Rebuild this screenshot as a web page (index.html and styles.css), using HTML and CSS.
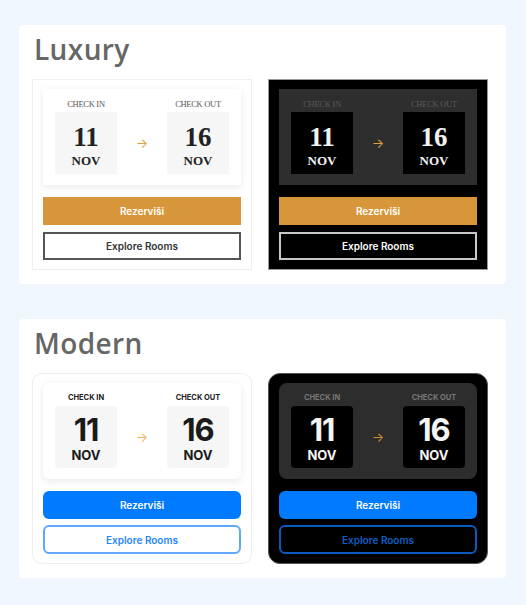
FILE: index.html
```html
<!DOCTYPE html>
<html lang="en">
<head>
    <meta charset="UTF-8">
    <meta name="viewport" content="width=device-width, initial-scale=1.0">
    <title>Booking Widgets</title>
    <link rel="stylesheet" href="styles.css">
</head>
<body>
    <main class="page">

        <!-- Luxury theme -->
        <section class="panel">
            <h2 class="panel-title">Luxury</h2>
            <div class="card-row">
                <div class="card luxury light">
                    <div class="dates">
                        <span class="label">CHECK IN</span>
                        <span class="label">CHECK OUT</span>
                        <div class="tile"><span class="day">11</span><span class="month">NOV</span></div>
                        <span class="arrow">&rarr;</span>
                        <div class="tile"><span class="day">16</span><span class="month">NOV</span></div>
                    </div>
                    <button class="btn btn-book">Rezerviši</button>
                    <button class="btn btn-explore">Explore Rooms</button>
                </div>
                <div class="card luxury dark">
                    <div class="dates">
                        <span class="label">CHECK IN</span>
                        <span class="label">CHECK OUT</span>
                        <div class="tile"><span class="day">11</span><span class="month">NOV</span></div>
                        <span class="arrow">&rarr;</span>
                        <div class="tile"><span class="day">16</span><span class="month">NOV</span></div>
                    </div>
                    <button class="btn btn-book">Rezerviši</button>
                    <button class="btn btn-explore">Explore Rooms</button>
                </div>
            </div>
        </section>

        <!-- Modern theme -->
        <section class="panel">
            <h2 class="panel-title">Modern</h2>
            <div class="card-row">
                <div class="card modern light">
                    <div class="dates">
                        <span class="label">CHECK IN</span>
                        <span class="label">CHECK OUT</span>
                        <div class="tile"><span class="day">11</span><span class="month">NOV</span></div>
                        <span class="arrow">&rarr;</span>
                        <div class="tile"><span class="day">16</span><span class="month">NOV</span></div>
                    </div>
                    <button class="btn btn-book">Rezerviši</button>
                    <button class="btn btn-explore">Explore Rooms</button>
                </div>
                <div class="card modern dark">
                    <div class="dates">
                        <span class="label">CHECK IN</span>
                        <span class="label">CHECK OUT</span>
                        <div class="tile"><span class="day">11</span><span class="month">NOV</span></div>
                        <span class="arrow">&rarr;</span>
                        <div class="tile"><span class="day">16</span><span class="month">NOV</span></div>
                    </div>
                    <button class="btn btn-book">Rezerviši</button>
                    <button class="btn btn-explore">Explore Rooms</button>
                </div>
            </div>
        </section>

    </main>
</body>
</html>
```

FILE: styles.css
```css
body {
    margin: 0;
    padding: 0;
    background-color: #f0f6fd;
    font-family: 'Inter', sans-serif;
}

.page {
    display: flex;
    flex-direction: column;
    gap: 35px;
    padding: 25px 0 0 19px;
}

/* Panel */
.panel {
    width: 487px;
    box-sizing: border-box;
    background-color: #fff;
    border-radius: 4px;
    padding: 10px 18px 14px 13px;
}

.panel-title {
    margin: 0 0 16px 2px;
    font-family: 'Open Sans', sans-serif;
    font-size: 28px;
    font-weight: 600;
    line-height: 28px;
    color: #666;
    letter-spacing: 0.4px;
}

.card-row {
    display: flex;
    gap: 16px;
}

/* Card */
.card {
    width: 220px;
    box-sizing: border-box;
    padding: 9px 10px;
    display: flex;
    flex-direction: column;
    border: 1px solid #eee;
}

.dates {
    display: grid;
    grid-template-columns: 62px 1fr 62px;
    grid-template-rows: 10px 62px;
    row-gap: 3px;
    padding: 10px 12px 11px 12px;
    margin-bottom: 12px;
}

.label {
    font-size: 8px;
    line-height: 10px;
    text-align: center;
    white-space: nowrap;
    justify-self: center;
}

.dates .label:nth-child(2) {
    grid-column: 3;
}

.tile {
    display: flex;
    flex-direction: column;
    align-items: center;
    justify-content: center;
}

.day {
    line-height: 1;
}

.month {
    line-height: 1;
}

.arrow {
    align-self: center;
    justify-self: center;
    color: #e0a040;
    font-size: 13px;
}

/* Buttons */
.btn {
    display: block;
    width: 100%;
    height: 28px;
    box-sizing: border-box;
    border: none;
    font-family: 'Inter', sans-serif;
    font-size: 10px;
    font-weight: 600;
    cursor: pointer;
}

.btn-book {
    color: #fff;
    margin-bottom: 7px;
}

.btn-explore {
    border: 2px solid;
}

/* Luxury */
.luxury .label {
    font-family: 'Liberation Serif', serif;
    font-size: 8.5px;
    letter-spacing: -0.3px;
}

.luxury .day {
    font-family: 'Liberation Serif', serif;
    font-size: 27px;
    font-weight: 700;
    margin-top: 4px;
}

.luxury .month {
    font-family: 'Liberation Serif', serif;
    font-size: 13px;
    font-weight: 700;
    margin-top: 3px;
}

.luxury .btn-book {
    background-color: #d8963a;
}

.luxury.light .dates {
    background-color: #fff;
    box-shadow: 0 2px 8px rgba(0, 0, 0, 0.09);
}

.luxury.light .label {
    color: #555;
}

.luxury.light .tile {
    background-color: #f6f6f6;
    color: #222;
}

.luxury.light .btn-explore {
    background-color: #fff;
    border-color: #555;
    color: #333;
}

.luxury.dark {
    background-color: #000;
    border-color: #999;
}

.luxury.dark .dates {
    background-color: #2e2e2e;
}

.luxury.dark .label {
    color: #5a5a5a;
}

.luxury.dark .tile {
    background-color: #000;
    color: #f2f2f2;
}

.luxury.dark .btn-explore {
    background-color: #000;
    border-color: #c8c8c8;
    color: #fff;
}

/* Modern */
.modern {
    border-radius: 10px;
}

.modern .dates {
    border-radius: 6px;
}

.modern .tile {
    border-radius: 4px;
}

.modern .label {
    font-weight: 700;
    font-size: 7.5px;
}

.modern .day {
    font-size: 31px;
    font-weight: 700;
    letter-spacing: -1px;
    margin-top: 2px;
}

.modern .month {
    font-size: 13px;
    font-weight: 700;
    margin-top: 4px;
}

.modern .btn {
    border-radius: 6px;
}

.modern .btn-book {
    background-color: #007bff;
    margin-bottom: 6px;
}

.modern .btn-explore {
    height: 29px;
}

.modern.light .dates {
    background-color: #fff;
    box-shadow: 0 2px 8px rgba(0, 0, 0, 0.09);
}

.modern.light .label {
    color: #222;
}

.modern.light .tile {
    background-color: #f6f6f6;
    color: #1a1a1a;
}

.modern.light .arrow {
    color: #f0b466;
}

.modern.light .btn-explore {
    background-color: #fff;
    border-color: #5ea8ff;
    color: #1f86ff;
}

.modern.dark {
    background-color: #000;
    border-color: #555;
    border-radius: 12px;
}

.modern.dark .dates {
    background-color: #2d2d2d;
    border-radius: 8px;
}

.modern.dark .label {
    color: #777;
}

.modern.dark .tile {
    background-color: #000;
    color: #f5f5f5;
}

.modern.dark .arrow {
    color: #c98a2e;
}

.modern.dark .btn-explore {
    background-color: #000;
    border-color: #0a5bbd;
    color: #0b5fc6;
}
```
